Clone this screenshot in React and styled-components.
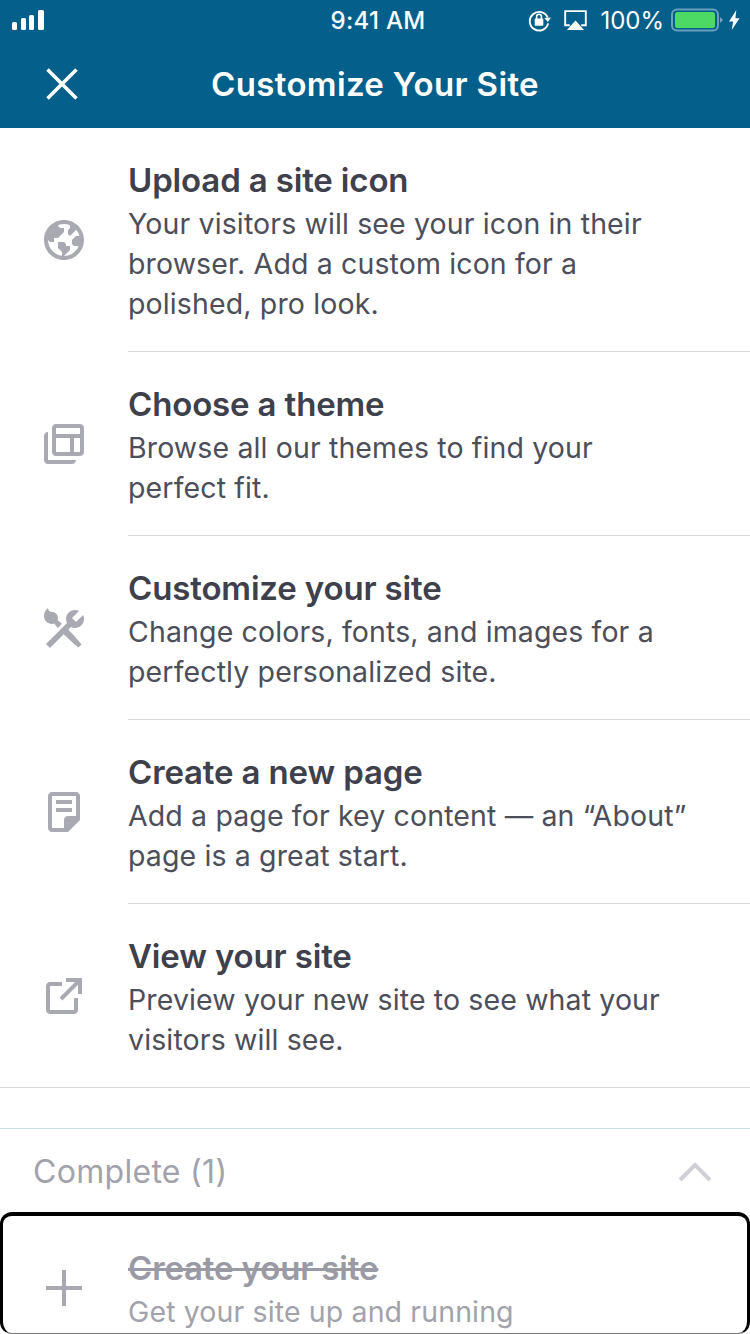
import React from 'react';
import styled, { createGlobalStyle } from 'styled-components';

const Global = createGlobalStyle`
  html, body { margin: 0; padding: 0; background: #fff; }
  body { font-family: Inter, "Noto Sans", sans-serif; -webkit-font-smoothing: antialiased; }
  * { box-sizing: border-box; }
`;

const Page = styled.div`
  width: 750px;
  height: 1334px;
  overflow: hidden;
  background: #fff;
  display: flex;
  flex-direction: column;
`;

const Header = styled.header`
  height: 128px;
  flex: none;
  background: #045f8b;
  color: #fff;
`;

const StatusBar = styled.div`
  height: 40px;
  display: grid;
  grid-template-columns: 1fr auto 1fr;
  align-items: center;
  padding: 0 10px 0 12px;
`;

const StatusClock = styled.span`
  font-size: 24px;
  font-weight: 500;
  letter-spacing: 0.3px;
  margin-left: 4px;
`;

const StatusRight = styled.div`
  display: flex;
  align-items: center;
  justify-content: flex-end;
  gap: 13px;
`;

const StatusPercent = styled.span`
  font-size: 24px;
  font-weight: 400;
`;

const BatteryGroup = styled.div`
  display: flex;
  align-items: center;
  gap: 4px;
  margin-left: -6px;
`;

const NavBar = styled.div`
  height: 88px;
  display: grid;
  grid-template-columns: 1fr auto 1fr;
  align-items: center;
  padding: 0 44px;
`;

const NavTitle = styled.h1`
  margin: 0;
  font-size: 33px;
  font-weight: 600;
  letter-spacing: 0.35px;
`;

const Row = styled.div`
  height: ${p => p.$h}px;
  display: flex;
  align-items: center;
  flex: none;
  border-bottom: ${p => (p.$fullLine ? '1px solid #d8d8dc' : 'none')};
`;

const IconCell = styled.div`
  flex: none;
  width: 128px;
  padding-left: 40px;
  display: flex;
  color: #a9a9b2;
`;

const Content = styled.div`
  flex: 1;
  height: 100%;
  display: flex;
  flex-direction: column;
  justify-content: center;
  border-bottom: ${p => (p.$line ? '1px solid #d8d8dc' : 'none')};
  padding-top: 1px;
`;

const Title = styled.div`
  font-size: 33px;
  line-height: 48px;
  font-weight: 600;
  color: #3e404b;
  letter-spacing: -0.15px;
`;

const Desc = styled.div`
  font-size: 28.500px;
  line-height: 40px;
  color: #4c4e5a;
  letter-spacing: 0.13px;
`;

const Spacer = styled.div`
  height: 40px;
  flex: none;
`;

const SectionHeader = styled.div`
  height: 84px;
  flex: none;
  border-top: 1px solid #c8dce6;
  display: flex;
  align-items: center;
  justify-content: space-between;
  padding: 2px 38px 0 33px;
`;

const SectionLabel = styled.span`
  font-size: 32px;
  color: #a2a2ab;
  letter-spacing: 0.3px;
`;

const FocusBox = styled.div`
  flex: none;
  height: 122px;
  border: 3px solid #000;
  border-top-width: 4px;
  border-bottom: 1px solid #777;
  border-radius: 12px;
  display: flex;
  align-items: flex-start;
  padding-top: 28px;
`;

const DoneIcon = styled(IconCell)`
  width: 125px;
  padding-left: 37px;
  margin-top: 20px;
`;

const DoneTitle = styled(Title)`
  color: #9a9aa4;
  text-decoration: line-through;
`;

const DoneDesc = styled(Desc)`
  color: #a2a2ab;
`;

const Gridicon = ({ d, size = 48 }) => (
  <svg width={size} height={size} viewBox="0 0 24 24" fill="currentColor"><path d={d} /></svg>
);

const icons = {
  globe: 'M12 2C6.477 2 2 6.477 2 12s4.477 10 10 10 10-4.477 10-10S17.523 2 12 2zm0 18l2-2 1-1v-2h-2v-1l-1-1H9v3l2 2v1.93c-3.94-.494-7-3.858-7-7.93l1 1h2v-2h2l3-3V6h-2L9 5v-.41C9.927 4.21 10.94 4 12 4s2.073.212 3 .59V6l-1 1v2l1 1 3.13-3.13c.752.897 1.304 1.964 1.606 3.13H18l-2 2v2l1 1h2l.286.286C18.03 18.06 15.24 20 12 20z',
  themes: 'M4 6c-1.105 0-2 .895-2 2v12c0 1.1.9 2 2 2h12c1.105 0 2-.895 2-2H4V6zm16-4H8c-1.105 0-2 .895-2 2v12c0 1.105.895 2 2 2h12c1.105 0 2-.895 2-2V4c0-1.105-.895-2-2-2zm-5 14H8V9h7v7zm5 0h-3V9h3v7zm0-9H8V4h12v3z',
  customize: 'M2 6c0-1.505.78-3.08 2-4 0 .845.69 2 2 2 1.657 0 3 1.343 3 3 0 .386-.08.752-.212 1.09.74.594 1.476 1.19 2.19 1.81L8.9 11.98c-.62-.716-1.214-1.454-1.807-2.192C6.753 9.92 6.387 10 6 10c-2.21 0-4-1.79-4-4zm12.152 6.848l1.34-1.34c.607.304 1.283.492 2.008.492 2.485 0 4.5-2.015 4.5-4.5 0-.725-.188-1.4-.493-2.007L18 9l-2-2 3.507-3.507C18.9 3.188 18.225 3 17.5 3 15.015 3 13 5.015 13 7.5c0 .725.188 1.4.493 2.007L3 20l2 2 6.848-6.848c1.885 1.928 3.874 3.753 5.977 5.45l1.425 1.148 1.5-1.5-1.15-1.425c-1.695-2.103-3.52-4.092-5.448-5.977z',
  page: 'M16 8H8V6h8v2zm0 2H8v2h8v-2zm4-6v12l-6 6H6c-1.105 0-2-.895-2-2V4c0-1.105.895-2 2-2h12c1.105 0 2 .895 2 2zm-2 10V4H6v16h6v-4c0-1.105.895-2 2-2h4z',
  external: 'M19 13v6c0 1.105-.895 2-2 2H5c-1.105 0-2-.895-2-2V7c0-1.105.895-2 2-2h6v2H5v12h12v-6h2zM13 3v2h4.586l-7.793 7.793 1.414 1.414L19 6.414V11h2V3h-8z',
  plus: 'M21 13h-8v8h-2v-8H3v-2h8V3h2v8h8v2z',
};

const SignalIcon = () => (
  <svg width="34" height="20" viewBox="0 0 34 20" fill="#fff">
    <rect x="0" y="12" width="5" height="8" rx="1.5" />
    <rect x="9" y="8" width="5" height="12" rx="1.5" />
    <rect x="17" y="5" width="5" height="15" rx="1.5" />
    <rect x="26" y="0" width="6" height="20" rx="1.5" />
  </svg>
);

const RotationLock = () => (
  <svg width="23" height="24" viewBox="0 0 24 24" fill="none">
    <path d="M20.500 9.500A9.700 9.700 0 1 0 21 15.500" stroke="#fff" strokeWidth="2" />
    <path d="M17 10l3.800 4 3.200-4.500z" fill="#fff" />
    <rect x="7" y="10.500" width="9" height="7.500" rx="1" fill="#fff" />
    <path d="M9 11V8.500a2.500 2.500 0 0 1 5 0V11" stroke="#fff" strokeWidth="1.600" />
  </svg>
);

const AirPlay = () => (
  <svg width="23" height="21" viewBox="0 0 24 22" fill="none">
    <path d="M6 16H1.200V1.200h21.600V16H18" stroke="#fff" strokeWidth="2" />
    <path d="M12 11l9 10H3z" fill="#fff" />
  </svg>
);

const Battery = () => (
  <svg width="54" height="24" viewBox="0 0 54 24" fill="none">
    <rect x="1" y="1.500" width="46" height="21" rx="5" stroke="#fff" strokeOpacity=".4" strokeWidth="2" />
    <rect x="4" y="4" width="40" height="16" rx="2.500" fill="#4cd964" />
    <path d="M49 9l3 3-3 3z" fill="#fff" fillOpacity=".45" />
  </svg>
);

const Bolt = () => (
  <svg width="11" height="22" viewBox="0 0 12 22" fill="#fff">
    <path d="M8 0L0 12.500h4.500L3 22l8.500-13H7z" />
  </svg>
);

const CloseIcon = () => (
  <svg width="36" height="36" viewBox="0 0 36 36" fill="none" stroke="#fff" strokeWidth="3.600">
    <path d="M3.500 3.500l29 29M32.500 3.500l-29 29" />
  </svg>
);

const Chevron = () => (
  <svg width="34" height="20" viewBox="0 0 34 20" fill="none" stroke="#cfcfd5" strokeWidth="4">
    <path d="M2 18L17 3l15 15" />
  </svg>
);

const items = [
  { icon: 'globe', h: 224, title: 'Upload a site icon', desc: ['Your visitors will see your icon in their', 'browser. Add a custom icon for a', 'polished, pro look.'], line: true },
  { icon: 'themes', h: 184, title: 'Choose a theme', desc: ['Browse all our themes to find your', 'perfect fit.'], line: true },
  { icon: 'customize', h: 184, title: 'Customize your site', desc: ['Change colors, fonts, and images for a', 'perfectly personalized site.'], line: true },
  { icon: 'page', h: 184, title: 'Create a new page', desc: ['Add a page for key content — an “About”', 'page is a great start.'], line: true },
  { icon: 'external', h: 184, title: 'View your site', desc: ['Preview your new site to see what your', 'visitors will see.'], full: true },
];

export default function App() {
  return (
    <Page>
      <Global />
      <Header>
        <StatusBar>
          <SignalIcon />
          <StatusClock>9:41 AM</StatusClock>
          <StatusRight>
            <RotationLock />
            <AirPlay />
            <StatusPercent>100%</StatusPercent>
            <BatteryGroup><Battery /><Bolt /></BatteryGroup>
          </StatusRight>
        </StatusBar>
        <NavBar>
          <CloseIcon />
          <NavTitle>Customize Your Site</NavTitle>
        </NavBar>
      </Header>
      {items.map(item => (
        <Row key={item.title} $h={item.h} $fullLine={item.full}>
          <IconCell><Gridicon d={icons[item.icon]} /></IconCell>
          <Content $line={item.line}>
            <Title>{item.title}</Title>
            <Desc>{item.desc.map(l => <div key={l}>{l}</div>)}</Desc>
          </Content>
        </Row>
      ))}
      <Spacer />
      <SectionHeader>
        <SectionLabel>Complete (1)</SectionLabel>
        <Chevron />
      </SectionHeader>
      <FocusBox>
        <DoneIcon><Gridicon d={icons.plus} /></DoneIcon>
        <div>
          <DoneTitle>Create your site</DoneTitle>
          <DoneDesc>Get your site up and running</DoneDesc>
        </div>
      </FocusBox>
    </Page>
  );
}
